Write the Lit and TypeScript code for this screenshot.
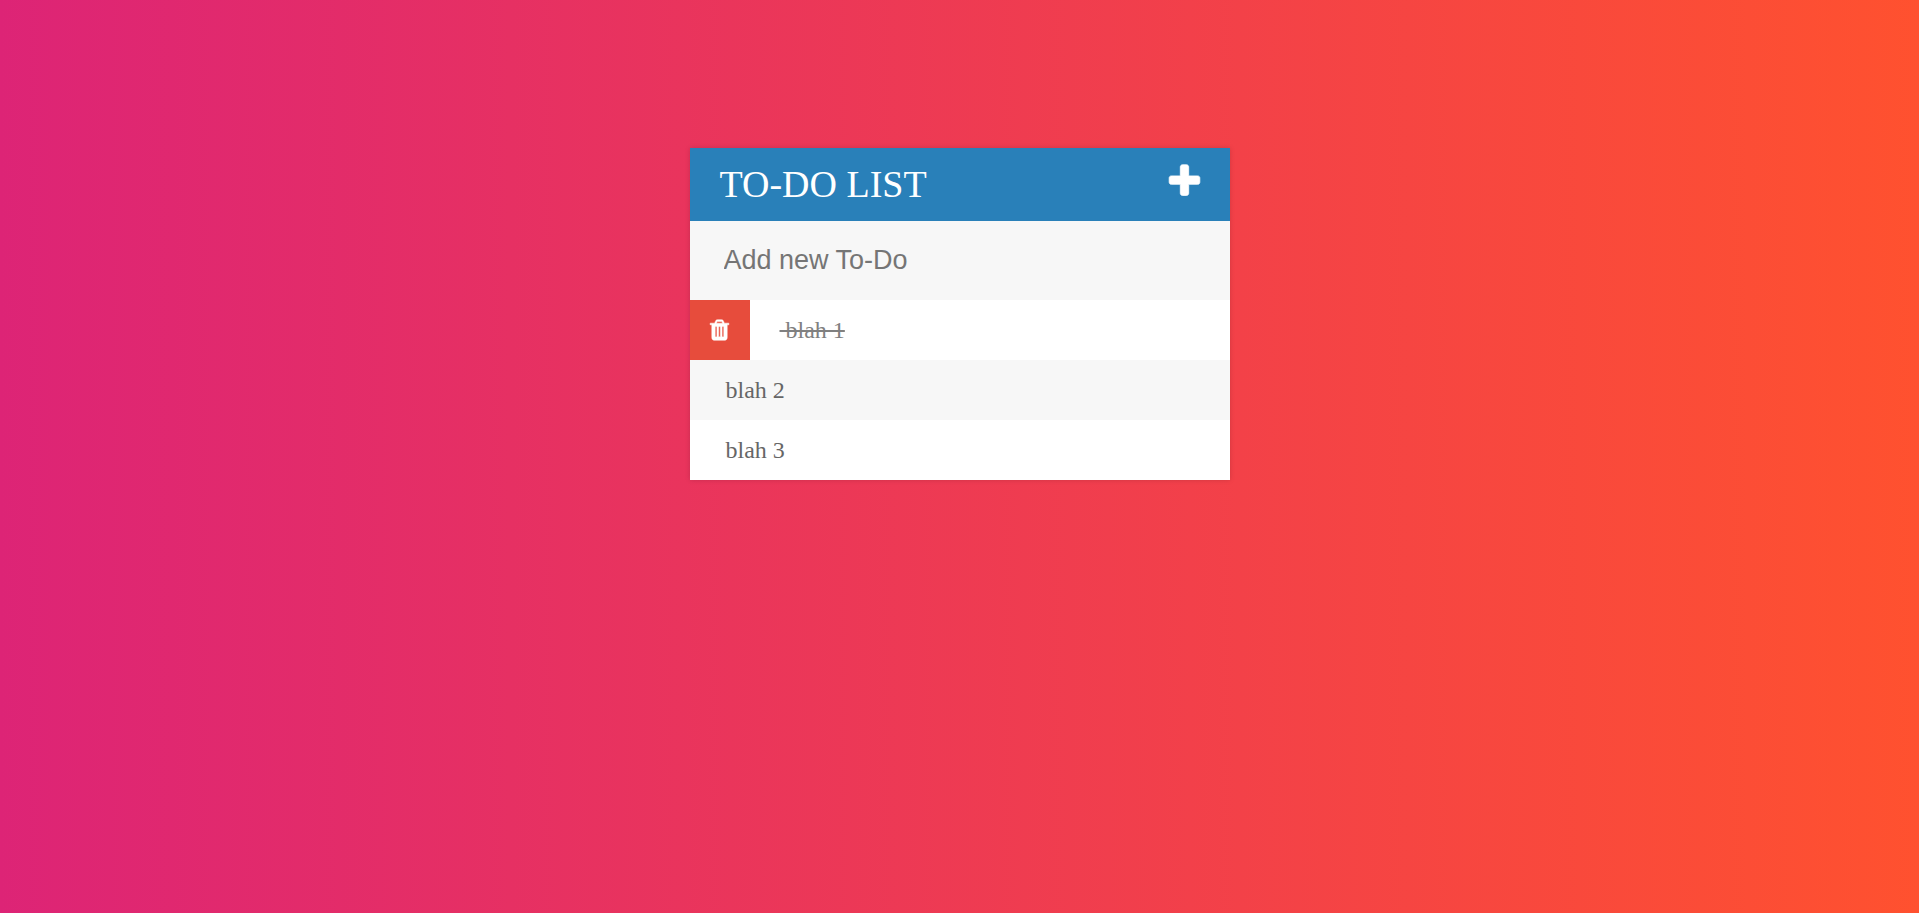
import { LitElement, html, css, svg } from "lit";
import { customElement, state } from "lit/decorators.js";

interface Todo {
  text: string;
  done: boolean;
}

const plusIcon = svg`<path d="M1408 736v192q0 40-28 68t-68 28h-416v416q0 40-28 68t-68 28h-192q-40 0-68-28t-28-68v-416h-416q-40 0-68-28t-28-68v-192q0-40 28-68t68-28h416v-416q0-40 28-68t68-28h192q40 0 68 28t28 68v416h416q40 0 68 28t28 68z"/>`;

const trashIcon = svg`<path d="M512 1376v-704q0-14-9-23t-23-9h-64q-14 0-23 9t-9 23v704q0 14 9 23t23 9h64q14 0 23-9t9-23zm256 0v-704q0-14-9-23t-23-9h-64q-14 0-23 9t-9 23v704q0 14 9 23t23 9h64q14 0 23-9t9-23zm256 0v-704q0-14-9-23t-23-9h-64q-14 0-23 9t-9 23v704q0 14 9 23t23 9h64q14 0 23-9t9-23zm-544-992h448l-48-117q-7-9-17-11h-317q-10 2-17 11zm928 32v64q0 14-9 23t-23 9h-96v948q0 83-47 143.500t-113 60.500h-832q-66 0-113-58.500t-47-141.500v-952h-96q-14 0-23-9t-9-23v-64q0-14 9-23t23-9h309l70-167q15-37 54-63t79-26h320q40 0 79 26t54 63l70 167h309q14 0 23 9t9 23z"/>`;

@customElement("app-root")
export class AppRoot extends LitElement {
  static styles = css`
    :host {
      display: block;
      box-sizing: border-box;
      min-height: 100vh;
      padding: 148px 16px 16px;
      background: linear-gradient(to right, #dd2476, #ff512f);
      font-family: "Liberation Serif", "Times New Roman", serif;
    }
    button {
      border: 0;
      padding: 0;
      background: none;
      color: #fff;
      cursor: pointer;
      font: inherit;
    }
    svg {
      display: block;
      overflow: visible;
      fill: currentColor;
      stroke: currentColor;
      stroke-width: 36;
    }
    .card {
      max-width: 540px;
      margin: 0 auto;
      background: #f7f7f7;
      box-shadow: 0 0 5px rgba(0, 0, 0, 0.15);
    }
    .header {
      display: flex;
      justify-content: space-between;
      align-items: flex-start;
      padding: 14px 30px;
      background: #2980b9;
      color: #fff;
    }
    .title {
      margin: 0;
      font-size: 38px;
      font-weight: 400;
      line-height: 45px;
    }
    .toggle svg {
      width: 31px;
      height: 39px;
    }
    .entry {
      display: block;
      box-sizing: border-box;
      width: 100%;
      margin: 0;
      padding: 20px 34px;
      border: 0;
      border-radius: 0;
      background: #f7f7f7;
      color: #2980b9;
      font: 27px/39px "Liberation Sans", Arial, sans-serif;
    }
    .entry::placeholder {
      color: #757575;
      opacity: 1;
    }
    .entry:focus-visible {
      outline: 3px solid #2980b9;
      outline-offset: -3px;
    }
    .list {
      margin: 0;
      padding: 0;
      list-style: none;
    }
    .item {
      display: flex;
      background: #f7f7f7;
      color: #666;
      font-size: 24px;
      line-height: 60px;
    }
    .item:nth-child(odd) {
      background: #fff;
    }
    .label {
      flex: 1;
      padding: 0 30px;
      text-align: left;
      white-space: pre;
      color: inherit;
    }
    .done .label {
      color: gray;
      text-decoration: line-through;
    }
    .remove {
      display: flex;
      align-items: center;
      justify-content: center;
      width: 60px;
      background: #e74c3c;
    }
    .remove svg {
      width: 19px;
      height: 24px;
    }
  `;

  @state() private open = true;
  @state() private todos: Todo[] = [
    { text: "blah 1", done: true },
    { text: "blah 2", done: false },
    { text: "blah 3", done: false },
  ];

  private toggle(index: number) {
    this.todos = this.todos.map((t, i) => (i === index ? { ...t, done: !t.done } : t));
  }

  private remove(index: number) {
    this.todos = this.todos.filter((_, i) => i !== index);
  }

  private add(e: KeyboardEvent) {
    const field = e.target as HTMLInputElement;
    if (e.key !== "Enter" || !field.value.trim()) return;
    this.todos = [...this.todos, { text: field.value.trim(), done: false }];
    field.value = "";
  }

  render() {
    return html`
      <main class="card">
        <header class="header">
          <h1 class="title">TO-DO LIST</h1>
          <button class="toggle" aria-label="Toggle entry field" @click=${() => (this.open = !this.open)}>
            <svg viewBox="0 0 1408 1792" aria-hidden="true">${plusIcon}</svg>
          </button>
        </header>
        ${this.open
          ? html`<input class="entry" type="text" placeholder="Add new To-Do" aria-label="Add new To-Do" @keydown=${this.add} />`
          : null}
        <ul class="list">
          ${this.todos.map(
            (t, i) => html`<li class="item ${t.done ? "done" : ""}">
              ${t.done
                ? html`<button class="remove" aria-label="Delete ${t.text}" @click=${() => this.remove(i)}>
                    <svg viewBox="0 0 1408 1792" aria-hidden="true">${trashIcon}</svg>
                  </button>`
                : null}
              <button class="label" @click=${() => this.toggle(i)}>${" " + t.text}</button>
            </li>`
          )}
        </ul>
      </main>
    `;
  }
}
